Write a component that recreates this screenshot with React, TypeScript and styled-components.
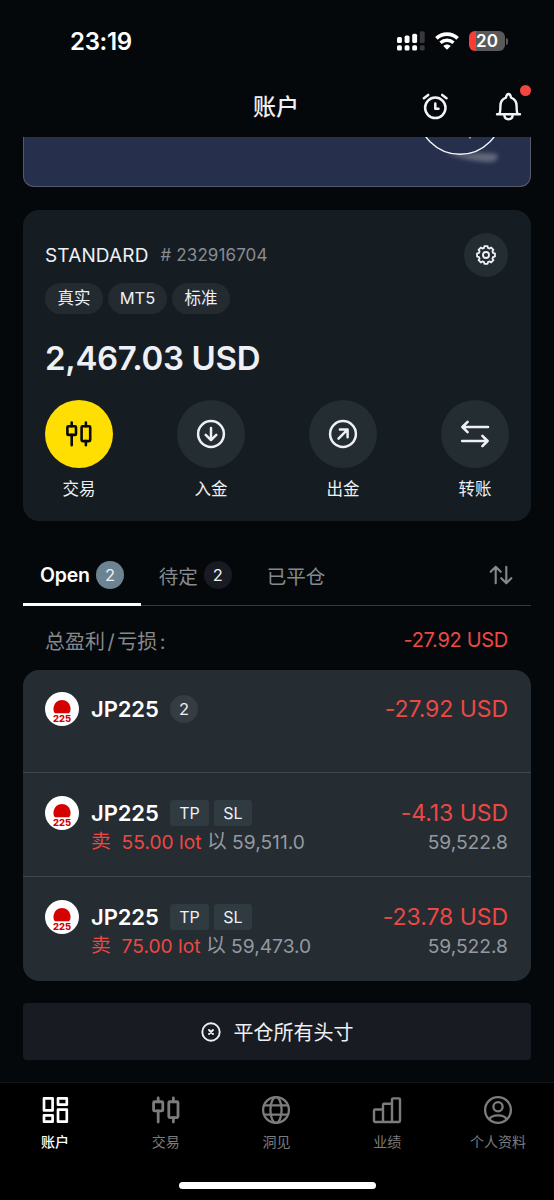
import React from 'react';
import styled, { createGlobalStyle } from 'styled-components';

const GlobalStyle = createGlobalStyle`
  * { box-sizing: border-box; }
  body {
    margin: 0;
    background: #05080b;
    font-family: Inter, "Noto Sans CJK SC", sans-serif;
    color: #eef0f5;
  }
`;

const Screen = styled.div`
  width: 554px;
  height: 1200px;
  display: flex;
  flex-direction: column;
  overflow: hidden;
  background: #05080b;
`;

const StatusBar = styled.div`
  height: 82px;
  flex: none;
  display: flex;
  justify-content: space-between;
  padding: 29px 46px 0 70px;
`;

const Time = styled.div`
  font-size: 24px;
  line-height: 25px;
  font-weight: 600;
  letter-spacing: -0.3px;
  color: #fff;
`;

const StatusIcons = styled.div`
  display: flex;
  align-items: center;
  height: 24px;
  gap: 10px;
`;

const Battery = styled.div`
  display: flex;
  align-items: center;
  gap: 1px;
`;

const BatteryBody = styled.div`
  width: 36px;
  height: 20px;
  border-radius: 6px;
  background: linear-gradient(to right, #fb3c35 7px, #59595b 7px);
  font-size: 17px;
  line-height: 20px;
  font-weight: 600;
  text-align: center;
  color: #fff;
`;

const BatteryNub = styled.div`
  width: 2px;
  height: 7px;
  border-radius: 0 2px 2px 0;
  background: #59595b;
`;

const Header = styled.header`
  height: 55px;
  flex: none;
  display: grid;
  grid-template-columns: 1fr auto 1fr;
  align-items: center;
  padding: 0 32px 6px 30px;
`;

const Title = styled.h1`
  grid-column: 2;
  margin: 0;
  font-size: 23px;
  line-height: 30px;
  font-weight: 500;
`;

const HeaderActions = styled.div`
  display: flex;
  justify-content: flex-end;
  gap: 47px;
  height: 30px;
  svg { display: block; }
`;

const BellButton = styled.div`
  position: relative;
`;

const Dot = styled.span`
  position: absolute;
  width: 11px;
  height: 11px;
  right: -9px;
  top: -7px;
  border-radius: 50%;
  background: #ef4844;
`;

const Content = styled.main`
  flex: 1;
  min-height: 0;
  padding: 0 23px;
  display: flex;
  flex-direction: column;
`;

const Banner = styled.div`
  height: 50px;
  flex: none;
  display: flex;
  justify-content: flex-end;
  padding-right: 21px;
  border: 1px solid #535a6d;
  border-top: 0;
  border-radius: 0 0 11px 11px;
  background: #262f4c;
`;

const AccountCard = styled.section`
  margin-top: 23px;
  height: 311px;
  flex: none;
  padding: 23px 22px 0;
  border-radius: 16px;
  background: #161d22;
`;

const AccountHead = styled.div`
  display: flex;
  align-items: center;
  height: 44px;
`;

const AccountName = styled.span`
  font-size: 19px;
  letter-spacing: 0.15px;
`;

const AccountNumber = styled.span`
  margin-left: 12px;
  font-size: 17px;
  letter-spacing: 0.1px;
  color: #878b92;
`;

const RoundButton = styled.div<{ $size: number; $accent?: boolean }>`
  width: ${(p) => p.$size}px;
  height: ${(p) => p.$size}px;
  border-radius: 50%;
  display: flex;
  align-items: center;
  justify-content: center;
  color: ${(p) => (p.$accent ? '#0a0a05' : '#eef0f5')};
  background: ${(p) => (p.$accent ? '#ffde02' : '#242d32')};
`;

const SettingsSlot = styled.div`
  margin: 0 1px 0 auto;
`;

const Chips = styled.div`
  display: flex;
  gap: 5px;
  margin-top: 6px;
`;

const Chip = styled.span<{ $width: number }>`
  width: ${(p) => p.$width}px;
  height: 31px;
  border-radius: 16px;
  background: #232b31;
  font-size: 16.5px;
  line-height: 31px;
  text-align: center;
`;

const Balance = styled.div`
  margin-top: 22px;
  height: 44px;
  font-size: 33px;
  line-height: 44px;
  font-weight: 600;
  letter-spacing: -0.35px;
`;

const Actions = styled.div`
  display: flex;
  justify-content: space-between;
  margin-top: 20px;
`;

const Action = styled.div`
  display: flex;
  flex-direction: column;
  align-items: center;
  gap: 9px;
  width: 68px;
  font-size: 16.5px;
  line-height: 25px;
`;

const Tabs = styled.nav`
  margin-top: 24px;
  height: 61px;
  flex: none;
  display: flex;
  align-items: stretch;
  border-bottom: 1px solid #34383b;
`;

const Tab = styled.div<{ $active?: boolean }>`
  display: flex;
  align-items: center;
  gap: 6px;
  height: 61px;
  padding: 2px 17px 0 ${(p) => (p.$active ? 17 : 18)}px;
  border-bottom: 3px solid ${(p) => (p.$active ? '#fff' : 'transparent')};
  font-size: 19.5px;
  font-weight: ${(p) => (p.$active ? 600 : 400)};
  letter-spacing: ${(p) => (p.$active ? -0.2 : 0)}px;
  color: ${(p) => (p.$active ? '#fff' : '#868a8e')};
`;

const Count = styled.span<{ $bg: string }>`
  width: 28px;
  height: 28px;
  border-radius: 50%;
  background: ${(p) => p.$bg};
  color: #eef0f5;
  font-size: 16.5px;
  line-height: 28px;
  font-weight: 400;
  text-align: center;
`;

const SortSlot = styled.div`
  display: flex;
  align-items: center;
  margin: 0 18px 0 auto;
`;

const Summary = styled.div`
  height: 64px;
  flex: none;
  display: flex;
  align-items: center;
  justify-content: space-between;
  padding: 4px 23px 0 22px;
  font-size: 20px;
  color: #85898d;
`;

const Separator = styled.span`
  padding: 0 2.5px;
`;

const Loss = styled.span`
  letter-spacing: -0.3px;
  color: #ec4844;
`;

const Positions = styled.section`
  height: 311px;
  flex: none;
  border-radius: 16px;
  overflow: hidden;
  background: #252c32;
`;

const PositionRow = styled.div<{ $height: number }>`
  height: ${(p) => p.$height}px;
  padding: 23px 23px 0 22px;
  display: flex;
  border-bottom: 1px solid #42494e;
  &:first-child { padding-top: 22px; }
  &:last-child { border-bottom: 0; }
`;

const Body = styled.div`
  flex: 1;
  margin-left: 12px;
`;

const Line = styled.div<{ $height: number }>`
  height: ${(p) => p.$height}px;
  display: flex;
  align-items: center;
  white-space: pre;
`;

const Symbol = styled.span`
  width: 79px;
  font-size: 22px;
  font-weight: 600;
  letter-spacing: -0.1px;
  color: #fff;
`;

const Tag = styled.span<{ $width: number }>`
  width: ${(p) => p.$width}px;
  height: 26px;
  margin-right: 5px;
  border-radius: 3px;
  background: #303a41;
  font-size: 16px;
  line-height: 26px;
  text-align: center;
`;

const Profit = styled.span`
  margin-left: auto;
  font-size: 23px;
  letter-spacing: -0.05px;
  color: #ec4844;
`;

const Detail = styled.span<{ $loss?: boolean }>`
  font-size: 19.2px;
  line-height: 24px;
  color: ${(p) => (p.$loss ? '#ec4844' : '#9499a0')};
`;

const Han = styled.span`
  font-size: 19.8px;
  line-height: 20px;
  vertical-align: 1px;
`;

const Price = styled(Detail)`
  margin-left: auto;
`;

const CloseAll = styled.div`
  margin-top: 22px;
  height: 57px;
  flex: none;
  display: flex;
  align-items: center;
  justify-content: center;
  gap: 13px;
  border-radius: 4px;
  background: #181c22;
  font-size: 20px;
`;

const BottomBar = styled.footer`
  height: 118px;
  flex: none;
  display: flex;
  flex-direction: column;
  align-items: center;
  border-top: 1px solid #14171a;
  background: #000;
`;

const NavItems = styled.div`
  width: 100%;
  height: 99px;
  display: grid;
  grid-template-columns: repeat(5, 1fr);
`;

const NavItem = styled.div<{ $active?: boolean }>`
  display: flex;
  flex-direction: column;
  align-items: center;
  gap: 5px;
  padding: 12px 1px 0 0;
  font-size: 14px;
  line-height: 23px;
  font-weight: ${(p) => (p.$active ? 500 : 400)};
  color: ${(p) => (p.$active ? '#fff' : '#7c7c7c')};
`;

const HomeIndicator = styled.div`
  width: 197px;
  height: 7px;
  border-radius: 4px;
  background: #fff;
`;

const SignalIcon = () => (
  <svg width="28" height="20" viewBox="0 0 28 20">
    {[6, 4.6, 2.7, 0.2].map((y, i) => (
      <g key={y} fill={i === 3 ? '#39393b' : '#fff'}>
        <rect x={i * 7.6} y={y} width="4.9" height={12 - y} rx="1.6" />
        <rect x={i * 7.6} y="14.3" width="4.9" height="5.2" rx="1.6" />
      </g>
    ))}
  </svg>
);

const WifiIcon = () => (
  <svg width="24" height="18" viewBox="0 0 24 18">
    <path d="M1.4 6.400C7.200.8 16.800.8 22.600 6.400" fill="none" stroke="#fff" strokeWidth="3.700" />
    <path d="M5.500 10.800c3.700-3.400 9.300-3.400 13 0" fill="none" stroke="#fff" strokeWidth="3.400" />
    <path d="M8.300 13.900c2.100-2 5.300-2 7.400 0L12 17.800z" fill="#fff" />
  </svg>
);

const AlarmIcon = () => (
  <svg width="26" height="28" viewBox="0 0 26 28" fill="none" stroke="#f2f3f6" strokeWidth="2.500" strokeLinecap="round" strokeLinejoin="round">
    <circle cx="13.300" cy="15.800" r="10.200" />
    <path d="M13.300 11.500v5.300h3.200M6.200 2.900 1.900 6.200M20.200 2.900l4.300 3.300" />
  </svg>
);

const BellIcon = () => (
  <svg width="27" height="29" viewBox="0 0 27 29" fill="none" stroke="#f2f3f6" strokeWidth="2.400" strokeLinecap="round" strokeLinejoin="round">
    <path d="M2 22.300h23M4.200 22.300c1.100-1.700 1.200-4 1.200-8.300 0-4.300 2.200-7.100 5.600-8.300C11.300 3.200 12.200 2 13.500 2s2.200 1.200 2.500 3.700c3.400 1.200 5.600 4 5.600 8.300 0 4.300.1 6.600 1.200 8.300M9.300 22.500c0 2.800 1.700 4.700 4.200 4.700s4.200-1.900 4.200-4.700" />
  </svg>
);

const BannerArt = () => (
  <svg width="90" height="49" viewBox="0 0 90 49">
    <defs>
      <filter id="soft" x="-30%" y="-100%" width="160%" height="300%">
        <feGaussianBlur stdDeviation="2.200" />
      </filter>
    </defs>
    <path d="M27 17c15 0 38-2 51 0 2 4-1 8-7 8-12 0-21-2-44-8z" fill="#777b8b" opacity=".75" filter="url(#soft)" />
    <circle cx="41" cy="-24.700" r="42" fill="#262f4c" stroke="#f3f4f8" strokeWidth="1.400" />
    <path d="M51 0v1.500" stroke="#d5d8e2" strokeWidth="1.300" />
  </svg>
);

const gearPoints = Array.from({ length: 8 }, (_, i) => {
  const at = (deg: number, r: number) => {
    const a = ((i * 45 + deg) * Math.PI) / 180;
    return `${(12 + r * Math.sin(a)).toFixed(2)},${(12 - r * Math.cos(a)).toFixed(2)}`;
  };
  return [at(-15, 8.1), at(-10, 9.9), at(10, 9.9), at(15, 8.1)].join(' ');
}).join(' ');

const GearIcon = () => (
  <svg width="22" height="22" viewBox="0 0 24 24" fill="none" stroke="currentColor" strokeWidth="2" strokeLinejoin="round">
    <polygon points={gearPoints} />
    <circle cx="12" cy="12" r="3.300" />
  </svg>
);

const CandlesIcon = ({ size = 28 }: { size?: number }) => (
  <svg width={size} height={size} viewBox="0 0 28 28" fill="none" stroke="currentColor" strokeWidth="2.600" strokeLinecap="round" strokeLinejoin="round">
    <rect x="2.400" y="6.300" width="8.600" height="8.600" rx="1" />
    <path d="M6.700 2.600v3.700M6.700 14.900v10.400M20.900 2.600v3.700M20.900 21.100v4.200" />
    <rect x="16.600" y="6.300" width="8.600" height="14.800" rx="1" />
  </svg>
);

const DepositIcon = () => (
  <svg width="30" height="30" viewBox="0 0 30 30" fill="none" stroke="currentColor" strokeWidth="2.500" strokeLinecap="round" strokeLinejoin="round">
    <circle cx="15" cy="15" r="12.900" />
    <path d="M15 8.900v12M9.700 15.800l5.300 5.300 5.300-5.300" />
  </svg>
);

const WithdrawIcon = () => (
  <svg width="30" height="30" viewBox="0 0 30 30" fill="none" stroke="currentColor" strokeWidth="2.500" strokeLinecap="round" strokeLinejoin="round">
    <circle cx="15" cy="15" r="12.900" />
    <path d="m10.500 19.700 9-9M11.900 10.600h7.700v7.700" />
  </svg>
);

const TransferIcon = () => (
  <svg width="30" height="30" viewBox="0 0 30 30" fill="none" stroke="currentColor" strokeWidth="2.600" strokeLinecap="round" strokeLinejoin="round">
    <path d="M28 8H2.500M7.600 2.900 2.400 8l5.200 5.100M2.200 22h25.400M22.400 16.900 27.600 22l-5.200 5.100" />
  </svg>
);

const SortIcon = () => (
  <svg width="24" height="20" viewBox="0 0 24 20" fill="none" stroke="#85898d" strokeWidth="2.100" strokeLinecap="round" strokeLinejoin="round">
    <path d="M6.700 18.200V2M1.700 6.800l5-5 5 5M17.300 1.800V18M12.300 13.200l5 5 5-5" />
  </svg>
);

const CloseCircleIcon = () => (
  <svg width="20" height="20" viewBox="0 0 20 20" fill="none" stroke="#eef0f5" strokeWidth="1.900" strokeLinecap="round">
    <circle cx="10" cy="10" r="8.700" />
    <path d="m8 8 4 4M12 8l-4 4" />
  </svg>
);

const DashboardIcon = () => (
  <svg width="30" height="30" viewBox="0 0 30 30" fill="none" stroke="currentColor" strokeWidth="2.700" strokeLinejoin="round">
    <rect x="4" y="3.400" width="8.600" height="12" />
    <rect x="4" y="20.400" width="8.600" height="6.300" />
    <rect x="18" y="3.400" width="8.800" height="6.300" />
    <rect x="18" y="14.700" width="8.800" height="12" />
  </svg>
);

const GlobeIcon = () => (
  <svg width="30" height="30" viewBox="0 0 30 30" fill="none" stroke="currentColor" strokeWidth="2.300">
    <circle cx="15" cy="15" r="12.900" />
    <ellipse cx="15" cy="15" rx="5.600" ry="12.900" />
    <path d="M3.200 10.300h23.600M3.200 19.700h23.600" />
  </svg>
);

const ChartIcon = () => (
  <svg width="30" height="30" viewBox="0 0 30 30" fill="none" stroke="currentColor" strokeWidth="2.400" strokeLinejoin="round">
    <path d="M11 27H3.200a1.200 1.200 0 0 1-1.200-1.200V15.700a1.200 1.200 0 0 1 1.200-1.200H11M20 27h-9V10a1.200 1.200 0 0 1 1.200-1.200H20M20 27h-9M20 27V4.600a1.200 1.200 0 0 1 1.200-1.200h5.600A1.200 1.200 0 0 1 28 4.600v21.200a1.200 1.200 0 0 1-1.200 1.200z" />
  </svg>
);

const ProfileIcon = () => (
  <svg width="30" height="30" viewBox="0 0 30 30" fill="none" stroke="currentColor" strokeWidth="2.300">
    <circle cx="15" cy="15" r="12.900" />
    <circle cx="15" cy="11.800" r="4.600" />
    <path d="M6.500 24.300c1.300-3 4.300-3.900 8.500-3.900s7.200.9 8.500 3.900" />
  </svg>
);

const IndexLogo = () => (
  <svg width="34" height="34" viewBox="0 0 34 34">
    <circle cx="17" cy="17" r="17" fill="#fff" />
    <path d="M9.800 21.300a8.600 8.600 0 1 1 14.400 0z" fill="#d50000" />
    <text x="17" y="29.500" textAnchor="middle" textLength="18" lengthAdjust="spacingAndGlyphs" fontFamily="Inter" fontSize="9.300" fontWeight="800" fill="#d50000">225</text>
  </svg>
);

const accountActions = [
  { label: '交易', icon: <CandlesIcon />, accent: true },
  { label: '入金', icon: <DepositIcon /> },
  { label: '出金', icon: <WithdrawIcon /> },
  { label: '转账', icon: <TransferIcon /> },
];

const positions = [
  { lots: '55.00', open: '59,511.0', profit: '-4.13 USD', price: '59,522.8', height: 104 },
  { lots: '75.00', open: '59,473.0', profit: '-23.78 USD', price: '59,522.8', height: 103 },
];

const navItems = [
  { label: '账户', icon: <DashboardIcon />, active: true },
  { label: '交易', icon: <CandlesIcon size={30} /> },
  { label: '洞见', icon: <GlobeIcon /> },
  { label: '业绩', icon: <ChartIcon /> },
  { label: '个人资料', icon: <ProfileIcon /> },
];

export default function App() {
  return (
    <Screen>
      <GlobalStyle />
      <StatusBar>
        <Time>23:19</Time>
        <StatusIcons>
          <SignalIcon />
          <WifiIcon />
          <Battery>
            <BatteryBody>20</BatteryBody>
            <BatteryNub />
          </Battery>
        </StatusIcons>
      </StatusBar>
      <Header>
        <Title>账户</Title>
        <HeaderActions>
          <AlarmIcon />
          <BellButton>
            <BellIcon />
            <Dot />
          </BellButton>
        </HeaderActions>
      </Header>
      <Content>
        <Banner>
          <BannerArt />
        </Banner>
        <AccountCard>
          <AccountHead>
            <AccountName>STANDARD</AccountName>
            <AccountNumber># 232916704</AccountNumber>
            <SettingsSlot>
              <RoundButton $size={44}>
                <GearIcon />
              </RoundButton>
            </SettingsSlot>
          </AccountHead>
          <Chips>
            <Chip $width={58}>真实</Chip>
            <Chip $width={59}>MT5</Chip>
            <Chip $width={58}>标准</Chip>
          </Chips>
          <Balance>2,467.03 USD</Balance>
          <Actions>
            {accountActions.map((a) => (
              <Action key={a.label}>
                <RoundButton $size={68} $accent={a.accent}>{a.icon}</RoundButton>
                {a.label}
              </Action>
            ))}
          </Actions>
        </AccountCard>
        <Tabs>
          <Tab $active>
            Open <Count $bg="#6c8492">2</Count>
          </Tab>
          <Tab>
            待定 <Count $bg="#181b22">2</Count>
          </Tab>
          <Tab>已平仓</Tab>
          <SortSlot>
            <SortIcon />
          </SortSlot>
        </Tabs>
        <Summary>
          <span>总盈利<Separator>/</Separator>亏损<Separator>:</Separator></span>
          <Loss>-27.92 USD</Loss>
        </Summary>
        <Positions>
          <PositionRow $height={103}>
            <IndexLogo />
            <Body>
              <Line $height={34}>
                <Symbol>JP225</Symbol>
                <Count $bg="#353d43">2</Count>
                <Profit>-27.92 USD</Profit>
              </Line>
            </Body>
          </PositionRow>
          {positions.map((p) => (
            <PositionRow key={p.lots} $height={p.height}>
              <IndexLogo />
              <Body>
                <Line $height={34}>
                  <Symbol>JP225</Symbol>
                  <Tag $width={39}>TP</Tag>
                  <Tag $width={38}>SL</Tag>
                  <Profit>{p.profit}</Profit>
                </Line>
                <Line $height={24}>
                  <Detail $loss><Han>卖</Han>  {p.lots} lot</Detail>
                  <Detail> <Han>以</Han> {p.open}</Detail>
                  <Price>{p.price}</Price>
                </Line>
              </Body>
            </PositionRow>
          ))}
        </Positions>
        <CloseAll>
          <CloseCircleIcon />
          平仓所有头寸
        </CloseAll>
      </Content>
      <BottomBar>
        <NavItems>
          {navItems.map((n) => (
            <NavItem key={n.label} $active={n.active}>
              {n.icon}
              {n.label}
            </NavItem>
          ))}
        </NavItems>
        <HomeIndicator />
      </BottomBar>
    </Screen>
  );
}
